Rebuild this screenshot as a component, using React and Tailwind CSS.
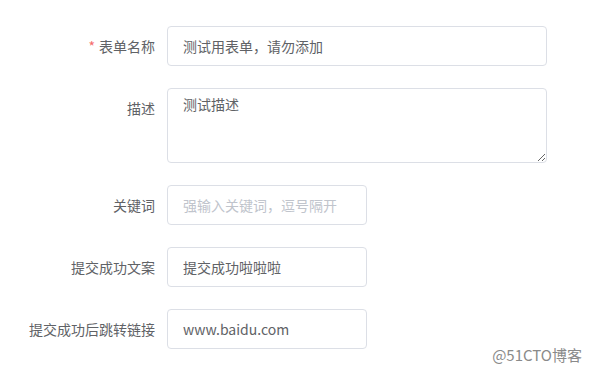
import React from "react";

const font = { fontFamily: '"Noto Sans CJK SC", "Liberation Sans", sans-serif' };

function Row({ label, required, children, top }) {
  return (
    <div className={`flex ${top ? "items-start" : "items-center"}`}>
      <div className="w-[167px] shrink-0 pr-[12px] text-right text-[14px] leading-[40px] text-[#606266]">
        {required && <span className="mr-[4px] text-[#f56c6c]">*</span>}
        {label}
      </div>
      {children}
    </div>
  );
}

export default function App() {
  return (
    <div
      className="relative h-[372px] w-[592px] bg-white pt-[26px] font-['Noto_Sans_CJK_SC','Liberation_Sans',sans-serif]"
      style={font}
    >
      <div className="flex flex-col gap-[22px]">
        <Row label="表单名称" required>
          <input
            readOnly
            value="测试用表单，请勿添加"
            className="h-[40px] w-[380px] rounded-[4px] border border-[#dcdfe6] bg-white px-[15px] text-[14px] text-[#606266] outline-none"
          />
        </Row>
        <Row label="描述" top>
          <textarea
            readOnly
            value="测试描述"
            className="h-[75px] w-[380px] resize-y rounded-[4px] border border-[#dcdfe6] bg-white px-[15px] py-[5px] text-[14px] leading-[1.5] text-[#606266] outline-none"
          />
        </Row>
        <Row label="关键词">
          <input
            readOnly
            placeholder="强输入关键词，逗号隔开"
            className="h-[40px] w-[200px] rounded-[4px] border border-[#dcdfe6] bg-white px-[15px] text-[14px] text-[#606266] outline-none placeholder:text-[#c0c4cc]"
          />
        </Row>
        <Row label="提交成功文案">
          <input
            readOnly
            value="提交成功啦啦啦"
            className="h-[40px] w-[200px] rounded-[4px] border border-[#dcdfe6] bg-white px-[15px] text-[14px] text-[#606266] outline-none"
          />
        </Row>
        <Row label="提交成功后跳转链接">
          <input
            readOnly
            value="www.baidu.com"
            className="h-[40px] w-[200px] rounded-[4px] border border-[#dcdfe6] bg-white px-[15px] text-[14px] text-[#606266] outline-none"
          />
        </Row>
      </div>
      <div className="absolute bottom-[10px] right-[10px] text-[15px] leading-none text-[#8a8a8a]">
        @51CTO博客
      </div>
    </div>
  );
}
